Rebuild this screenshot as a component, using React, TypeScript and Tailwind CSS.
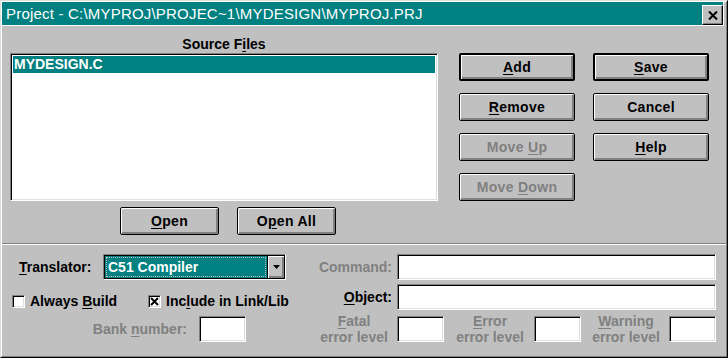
import React from "react";

// Win 3.1 style bevels
const sunken =
  "border border-t-[#808080] border-l-[#808080] border-r-white border-b-white shadow-[inset_1px_1px_0_#000,inset_-1px_-1px_0_#dfdfdf]";

const U: React.FC<{ children: React.ReactNode }> = ({ children }) => (
  <span className="underline decoration-1 underline-offset-[2px]">{children}</span>
);

interface PushButtonProps {
  children: React.ReactNode;
  className?: string;
  isDefault?: boolean;
  disabled?: boolean;
}

const PushButton: React.FC<PushButtonProps> = ({ children, className, isDefault, disabled }) => (
  <div
    className={[
      "h-[28px] flex items-center justify-center rounded-[2px] border-black bg-[#c0c0c0] tracking-[0.3px] shadow-[inset_1px_1px_0_#fff,inset_-1px_-1px_0_#808080,inset_-2px_-2px_0_#808080]",
      isDefault ? "border-2" : "border",
      disabled ? "text-[#808080]" : "text-black",
      className ?? "",
    ].join(" ")}
  >
    <span>{children}</span>
  </div>
);

const Checkbox: React.FC<{ checked?: boolean }> = ({ checked }) => (
  <div className={`w-[13px] h-[13px] bg-white ${sunken} flex items-center justify-center`}>
    {checked && (
      <svg width="9" height="9" viewBox="0 0 9 9">
        <path d="M1 1L8 8M8 1L1 8" stroke="#000" strokeWidth="2" />
      </svg>
    )}
  </div>
);

const TextBox: React.FC<{ className?: string }> = ({ className }) => (
  <div className={`h-[26px] bg-white ${sunken} ${className ?? ""}`} />
);

const LevelLabel: React.FC<{ first: React.ReactNode; className: string }> = ({ first, className }) => (
  <div className={`text-center leading-[16px] text-[#808080] ${className}`}>
    <div>{first}</div>
    <div>error level</div>
  </div>
);

export default function App() {
  return (
    <div className="w-[728px] h-[358px] bg-[#c0c0c0] border border-t-[#dfdfdf] border-l-[#dfdfdf] border-r-black border-b-black font-['Liberation_Sans',Arial,sans-serif] text-[14px] font-bold text-black select-none">
      <div className="h-full flex flex-col border border-t-white border-l-white border-r-[#808080] border-b-[#808080]">
        {/* Title bar */}
        <div className="h-[24px] mr-[2px] flex items-end justify-between bg-[#008080] border-b border-r border-white">
          <div className="self-center pl-[4px] text-white font-normal text-[15px] leading-[16px] tracking-[0.2px]">
            Project - C:\MYPROJ\PROJEC~1\MYDESIGN\MYPROJ.PRJ
          </div>
          <div className="w-[21px] h-[20px] flex items-center justify-center bg-[#c0c0c0] border border-t-white border-l-white border-r-black border-b-black shadow-[inset_-1px_-1px_0_#808080]">
            <svg width="10" height="9" viewBox="0 0 10 9">
              <path d="M1 0.5L9 8.5M9 0.5L1 8.5" stroke="#000" strokeWidth="2" />
            </svg>
          </div>
        </div>

        {/* Source files + command buttons */}
        <div className="flex pl-[8px] pt-[9px]">
          <div className="flex flex-col w-[428px]">
            <div className="h-[18px] leading-[18px] text-center">
              Source F<U>i</U>les
            </div>
            <div className={`h-[148px] bg-white p-[2px] ${sunken}`}>
              <div className="h-[17px] leading-[17px] bg-[#008080] text-white pl-[1px]">MYDESIGN.C</div>
            </div>
            <div className="flex gap-[18px] pl-[110px] mt-[6px]">
              <PushButton className="w-[99px]">
                <U>O</U>pen
              </PushButton>
              <PushButton className="w-[99px]">
                O<U>p</U>en All
              </PushButton>
            </div>
          </div>
          <div className="ml-[21px] pt-[18px] grid grid-cols-[116px_116px] gap-x-[18px] gap-y-[12px] content-start">
            <PushButton isDefault>
              <U>A</U>dd
            </PushButton>
            <PushButton isDefault>
              <U>S</U>ave
            </PushButton>
            <PushButton>
              <U>R</U>emove
            </PushButton>
            <PushButton>Cancel</PushButton>
            <PushButton disabled>
              Move <U>U</U>p
            </PushButton>
            <PushButton>
              <U>H</U>elp
            </PushButton>
            <PushButton disabled>
              Move <U>D</U>own
            </PushButton>
          </div>
        </div>

        {/* Separator */}
        <div className="mt-[8px] border-t border-b border-t-[#808080] border-b-white" />

        {/* Translator options */}
        <div className="pt-[9px] grid grid-cols-[297px_1fr] grid-rows-[26px_26px_26px] gap-y-[4px]">
          <div className="flex items-center pl-[17px]">
            <div className="w-[84px]">
              <U>T</U>ranslator:
            </div>
            <div className="w-[183px] h-[26px] border border-t-[#808080] border-l-[#808080] border-r-white border-b-white">
              <div className="h-full flex border border-black bg-white">
                <div className="flex-1 p-[1px] bg-[#008080]">
                  <div className="h-full flex items-center pl-[1px] text-white border border-dotted border-[#c0c0c0]">
                    C51 Compiler
                  </div>
                </div>
                <div className="w-[17px] flex items-center justify-center bg-[#c0c0c0] border-l border-black shadow-[inset_1px_1px_0_#fff,inset_-1px_-1px_0_#808080,inset_-2px_-2px_0_#808080]">
                  <svg width="7" height="4" viewBox="0 0 7 4">
                    <path d="M0 0H7L3.5 4Z" fill="#000" />
                  </svg>
                </div>
              </div>
            </div>
          </div>
          <div className="flex items-center">
            <div className="w-[93px] text-right text-[#808080]">Command:</div>
            <TextBox className="ml-[5px] w-[319px]" />
          </div>

          <div className="flex items-center pl-[10px] pt-[9px]">
            <div className="w-[136px] flex items-center gap-[5px]">
              <Checkbox />
              <span>
                Always <U>B</U>uild
              </span>
            </div>
            <div className="flex items-center gap-[5px]">
              <Checkbox checked />
              <span>
                Inc<U>l</U>ude in Link/Lib
              </span>
            </div>
          </div>
          <div className="flex items-center">
            <div className="w-[93px] text-right">
              <U>O</U>bject:
            </div>
            <TextBox className="ml-[5px] w-[319px]" />
          </div>

          <div className="flex items-center mt-[4px]">
            <div className="w-[185px] text-right text-[#808080]">
              Bank <U>n</U>umber:
            </div>
            <TextBox className="ml-[12px] w-[47px]" />
          </div>
          <div className="flex items-center mt-[4px]">
            <LevelLabel className="ml-[16px] w-[78px]" first={<><U>F</U>atal</>} />
            <TextBox className="ml-[4px] w-[47px]" />
            <LevelLabel className="ml-[2px] w-[88px]" first={<><U>E</U>rror</>} />
            <TextBox className="w-[47px]" />
            <LevelLabel className="ml-[2px] w-[86px]" first={<><U>W</U>arning</>} />
            <TextBox className="w-[47px]" />
          </div>
        </div>
      </div>
    </div>
  );
}
